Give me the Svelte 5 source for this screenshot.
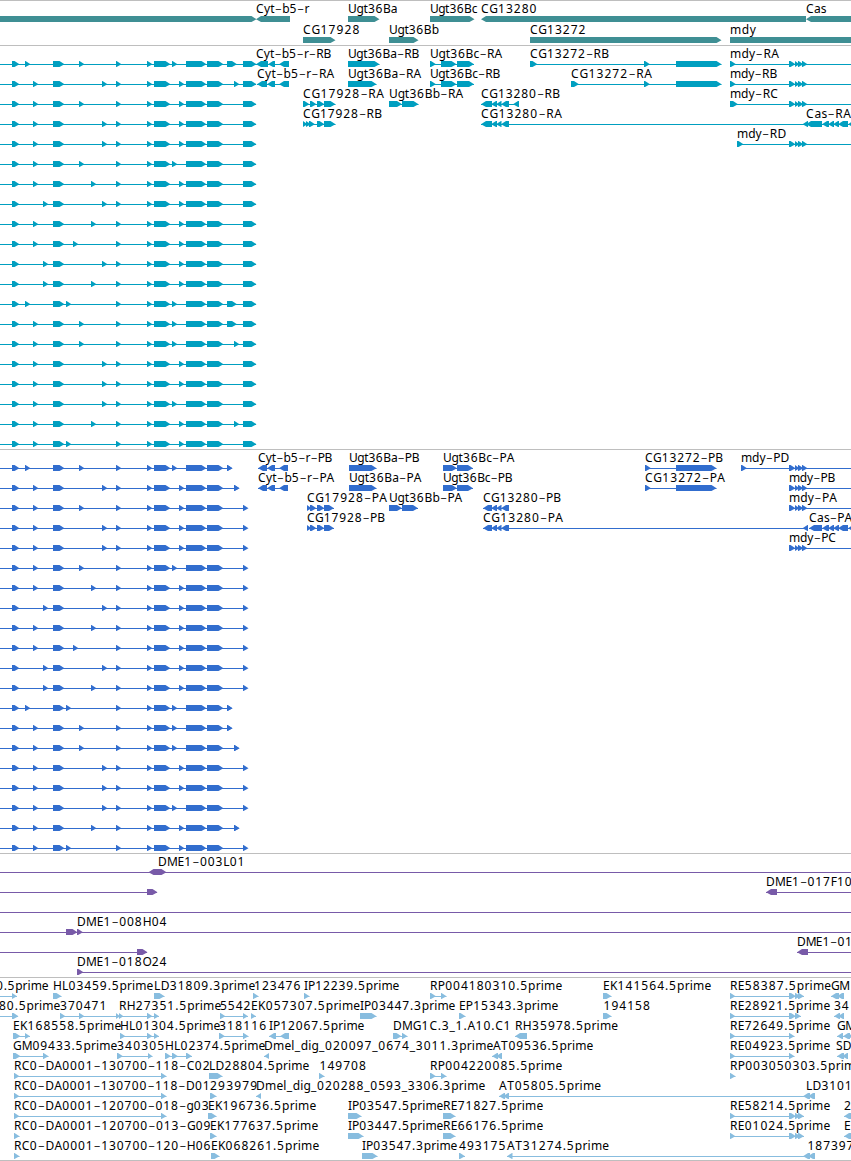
<script>
  const WIDTH = 851;

  // advance widths of the label characters, px at 12px type
  const advances = {
    '-': 7.8, '_': 6, '.': 4,
    A: 8, B: 8.2, C: 8.2, D: 9, E: 6.8, F: 6.4, G: 8.8, H: 9, I: 4, K: 7.6, L: 6.6,
    M: 10.6, O: 9.3, P: 7.3, R: 7.7, S: 6.8, T: 7.4, U: 8.8,
    a: 6.9, b: 7.5, c: 6, d: 7.5, e: 6.9, g: 7.3, i: 3.3, l: 3.3, m: 11.2, p: 7.5, r: 5, s: 5.8, t: 4.6, y: 6.4
  };

  // label, label start, label end, row, strand, blocks, [line start, line end]
  const feature = (label, x, end, row, strand, blocks, line) => {
    const line_ = line || [blocks[0][0], blocks[blocks.length - 1][1]];
    return { label, x, end, row, strand, blocks, line: line_ };
  };

  function place(label, x, end) {
    const chars = [...label];
    const widths = chars.map((c) => advances[c] ?? 7.8);
    const total = widths.reduce((a, b) => a + b, 0);
    const scale = end ? (end - x + 0.4) / total : 1;
    let pos = x;
    return widths.map((w, i) => {
      const at = chars[i] === '-' ? pos + 0.1 : pos;
      pos += w * scale;
      return at.toFixed(2);
    }).join(' ');
  }

  function baseline(label, y) {
    return [...label].map((c) => (c === '-' ? y + 2 : y)).join(' ');
  }

  function arrow([x1, x2], strand, y) {
    const top = y - 3;
    const bottom = y + 3;
    const head = Math.min(5, x2 - x1);
    if (strand === '<') {
      return `${x2},${top} ${x1 + head},${top} ${x1},${y + 0.2} ${x1 + head},${bottom} ${x2},${bottom}`;
    }
    return `${x1},${top} ${x2 - head},${top} ${x2},${y + 0.2} ${x2 - head},${bottom} ${x1},${bottom}`;
  }

  // alternative exons of each isoform at the left edge
  const isoforms = [
    [25, 79, 172, 227], [33, 102, 179, 234], [33, 79, 179], [33, 102, 179], [33, 102, 179],
    [33, 79, 172], [33, 91, 179], [43, 102, 179], [33, 91, 179], [33, 73, 179],
    [43, 102, 179], [43, 91, 179], [25, 66, 172, 227], [33, 79, 172, 227], [33, 79, 172, 234],
    [33, 102, 179], [33, 102, 179], [33, 102, 172], [33, 91, 179, 234], [33, 66, 179]
  ];
  const shared = [[12, 19.5], [53, 64.5], [116, 121.5], [147, 152.5], [154, 170.5], [186, 206.5], [207, 223.5]];

  const transcripts = isoforms.map((starts, row) => {
    const extra = starts.map((s) => [s, s === 227 ? 237 : s + 5.5]);
    return feature('', 0, 0, row, '>', [...shared, ...extra, [243, 256.5]], [0, 256]);
  });

  const proteins = isoforms.map((starts, row) => {
    const extra = starts.map((s) => [s, s + 5.5]);
    const last = starts[3] ?? 243;
    return feature('', 0, 0, row, '>', [...shared, ...extra, [last, last + 5.5]], [0, last + 4]);
  });

  const mdy = [[789, 795.5], [795, 799.5], [798, 803.5], [802, 807.5]];
  const cas = [[822, 829], [828, 834], [833, 839], [838, 848], [848, 858]];
  const cg13280 = [[491, 497], [496, 501.5], [501, 509]];

  const geneTrack = [
    feature('', 0, 0, 0, '>', [[-5, 256.5]]),
    feature('Cyt-b5-r', 256, 309, 0, '<', [[256, 290]]),
    feature('Ugt36Ba', 348, 397, 0, '>', [[348, 379.5]]),
    feature('CG13280', 481, 537, 0, '<', [[481, 806]]),
    feature('Ugt36Bc', 430, 477, 0, '>', [[430, 474.5]]),
    feature('Cas', 806, 826, 0, '<', [[806, 860]]),
    feature('CG17928', 303, 360, 1, '>', [[303, 335.5]]),
    feature('Ugt36Bb', 389, 438.5, 1, '>', [[389, 418.5]]),
    feature('CG13272', 530, 586, 1, '>', [[530, 721.5]]),
    feature('mdy', 730, 756, 1, '>', [[730, 870]])
  ];

  const rnaTrack = [
    ...transcripts,
    feature('Cyt-b5-r-RB', 256, 331, 0, '<', [[256, 268], [268, 275], [279, 289]]),
    feature('Cyt-b5-r-RA', 257, 334, 1, '<', [[257, 267], [267, 275], [279, 289]]),
    feature('Ugt36Ba-RB', 348, 419, 0, '>', [[348, 379.5]]),
    feature('Ugt36Ba-RA', 348, 421, 1, '>', [[348, 376.5]]),
    feature('Ugt36Bc-RA', 430, 502, 0, '>', [[430, 436], [441, 456.5], [457, 474]]),
    feature('Ugt36Bc-RB', 430, 500, 1, '>', [[430, 436], [441, 456.5], [457, 474]]),
    feature('CG17928-RA', 303, 384, 2, '>', [[303, 309.5], [310, 316.5], [317, 324.5], [324, 335.5]]),
    feature('CG17928-RB', 303, 382, 3, '>', [[303, 307.5], [306, 311], [309, 315], [317, 324.5], [324, 335.5]]),
    feature('Ugt36Bb-RA', 389, 463, 2, '>', [[389, 402], [402, 418.5]]),
    feature('CG13280-RB', 481, 560, 2, '<', [[481, 492], ...cg13280, [513, 519]]),
    feature('CG13280-RA', 481, 562, 3, '<', [[481, 492], ...cg13280, [802.5, 808]]),
    feature('CG13272-RB', 530, 609, 0, '>', [[530, 537.5], [644, 650], [676, 721.5]]),
    feature('CG13272-RA', 571, 652, 1, '>', [[571, 579], [644, 650], [676, 721.5]]),
    feature('mdy-RA', 730, 779, 0, '>', [[730, 736], ...mdy], [730, WIDTH]),
    feature('mdy-RB', 730, 777, 1, '>', [[730, 736], ...mdy], [730, WIDTH]),
    feature('mdy-RC', 730, 778, 2, '>', [[730, 738], ...mdy], [730, WIDTH]),
    feature('Cas-RA', 806, 851, 3, '<', [[806, 822], ...cas]),
    feature('mdy-RD', 737, 786, 4, '>', [[737, 743.5], ...mdy], [737, WIDTH])
  ];

  const proteinTrack = [
    ...proteins,
    feature('Cyt-b5-r-PB', 258, 332, 0, '<', [[258, 267], [267, 275], [279, 288]]),
    feature('Cyt-b5-r-PA', 258, 334, 1, '<', [[258, 267], [267, 275], [279, 288]]),
    feature('Ugt36Ba-PB', 349, 419, 0, '>', [[349, 376.5]]),
    feature('Ugt36Ba-PA', 349, 421, 1, '>', [[349, 376.5]]),
    feature('Ugt36Bc-PA', 443, 514, 0, '>', [[443, 457], [457, 473]]),
    feature('Ugt36Bc-PB', 443, 512, 1, '>', [[443, 457], [457, 473]]),
    feature('CG17928-PA', 307, 387, 2, '>', [[307, 311.5], [310, 316.5], [317, 324.5], [324, 334]]),
    feature('CG17928-PB', 307, 385, 3, '>', [[307, 311.5], [310, 316.5], [317, 324.5], [324, 334]]),
    feature('Ugt36Bb-PA', 389, 462, 2, '>', [[389, 402], [402, 418]]),
    feature('CG13280-PB', 483, 561, 2, '<', [[483, 492], ...cg13280]),
    feature('CG13280-PA', 483, 563, 3, '<', [[483, 492], ...cg13280, [802.5, 808]]),
    feature('CG13272-PB', 645, 723, 0, '>', [[645, 651], [676, 716.5]]),
    feature('CG13272-PA', 645, 725, 1, '>', [[645, 651], [676, 716.5]]),
    feature('mdy-PD', 741, 789, 0, '>', [[741, 747], ...mdy], [741, WIDTH]),
    feature('mdy-PB', 789, 835, 1, '>', mdy, [789, WIDTH]),
    feature('mdy-PA', 789, 837, 2, '>', mdy, [789, WIDTH]),
    feature('Cas-PA', 809, 852, 3, '<', [[809, 822], ...cas]),
    feature('mdy-PC', 789, 836, 4, '>', mdy, [789, WIDTH])
  ];

  const bacTrack = [
    feature('DME1-003L01', 158, 245, 0, '<', [[148.5, 160]], [0, WIDTH]),
    feature('', 0, 0, 0, '>', [[155, 166.5]]),
    feature('', 0, 0, 1, '>', [[147, 157.5]], [0, 157]),
    feature('DME1-017F10', 766, 852, 1, '<', [[766, 777]], [766, WIDTH]),
    feature('', 0, 0, 2, '>', [], [0, WIDTH]),
    feature('DME1-008H04', 77, 167, 3, '>', [[66, 77.5], [77, 83]], [0, WIDTH]),
    feature('', 0, 0, 4, '>', [[137, 147.5]], [0, 147]),
    feature('DME1-01', 797, 852, 4, '<', [[797, 808]], [797, WIDTH]),
    feature('DME1-018O24', 77, 167, 5, '>', [[77, 83.5]], [77, WIDTH])
  ];

  const re = [[730, 735.5], [789, 796], [795, 800.5], [798, 804]];

  const estTrack = [
    feature('0.5prime', -4, 48, 0, '>', [[12, 17]], [0, 17]),
    feature('HL03459.5prime', 53, 153, 0, '>', [[53, 61.5]]),
    feature('LD31809.3prime', 154, 255, 0, '>', [[154, 164.5]]),
    feature('123476', 254, 301, 0, '>', [[253, 258.5]]),
    feature('IP12239.5prime', 304, 399, 0, '>', [[304, 309.5]]),
    feature('RP004180310.5prime', 430, 562, 0, '>', [[430, 436], [441, 446.5]]),
    feature('EK141564.5prime', 603, 711, 0, '>', [[603, 611.5]]),
    feature('RE58387.5prime', 730, 831, 0, '>', re),
    feature('GM', 831, 849, 0, '<', [[831, 839], [837, 844]]),

    feature('80.5prime', -1, 60, 1, '>', [[12, 18.5]], [0, 18]),
    feature('370471', 60, 107, 1, '>', [[60, 65.5], [79, 84.5], [116, 120]]),
    feature('RH27351.5prime', 119, 221, 1, '>', [[119, 123.5], [147, 152.5], [154, 159]]),
    feature('5542', 220, 251, 1, '>', [[220, 225.5], [243, 248]]),
    feature('EK057307.5prime', 251, 360, 1, '>', [[251, 256]]),
    feature('IP03447.3prime', 360, 455, 1, '>', [[360, 376.5]]),
    feature('EP15343.3prime', 459, 558, 1, '>', [[459, 465.5]]),
    feature('194158', 603.5, 650.5, 1, '>', [[603, 611.5]]),
    feature('RE28921.5prime', 730, 830, 1, '>', [[730, 735.5], [789, 796], [795, 801]]),
    feature('34', 834, 849, 1, '<', [[834, 840], [838, 844]]),

    feature('EK168558.5prime', 13, 121, 2, '>', [[13, 20.5], [25, 30]]),
    feature('HL01304.5prime', 120, 220, 2, '>', [[120, 125.5], [147, 152.5], [154, 159]]),
    feature('318116', 219, 267, 2, '>', [[219, 225], [243, 248.5]]),
    feature('IP12067.5prime', 269, 364, 2, '<', [[269, 276], [280, 289]]),
    feature('DMG1C.3_1.A10.C1', 393, 511, 2, '>', [[393, 401.5], [402, 407.5]]),
    feature('RH35978.5prime', 515, 618, 2, '<', [[515, 527]]),
    feature('RE72649.5prime', 730, 830, 2, '>', [[730, 735.5], [789, 794.5]]),
    feature('GM', 837, 855, 2, '<', [[837, 843], [843, 850], [848, 858]]),

    feature('GM09433.5prime', 13, 117, 3, '>', [[13, 20.5], [43, 48.5]]),
    feature('340305', 117, 165, 3, '>', [[117, 123], [148, 152.5]]),
    feature('HL02374.5prime', 165, 265, 3, '>', [[165, 171], [172, 178], [186, 192]]),
    feature('Dmel_dig_020097_0674_3011.3prime', 264, 493, 3, '<', [[264, 269]]),
    feature('AT09536.5prime', 493, 593, 3, '<', [[492, 498], [496, 502]]),
    feature('RE04923.5prime', 730, 830, 3, '>', [[730, 735.5], [789, 794.5]]),
    feature('SD', 836, 851, 3, '<', [[837, 844], [842, 848]]),

    feature('RC0-DA0001-130700-118-C02', 14, 210, 4, '>', [[14, 19.5], [161, 166.5]]),
    feature('LD28804.5prime', 209, 309, 4, '>', [[209, 222.5]]),
    feature('149708', 319.5, 366.5, 4, '>', [[319, 324.5]]),
    feature('RP004220085.5prime', 430, 562, 4, '>', [[430, 436], [441, 446.5]]),
    feature('RP003050303.5prime', 730, 862, 4, '>', [[730, 735.5]]),

    feature('RC0-DA0001-130700-118-D01', 14, 210, 5, '>', [[14, 19.5], [161, 166.5]]),
    feature('293979', 210, 258, 5, '>', [[210, 216.5]]),
    feature('Dmel_dig_020288_0593_3306.3prime', 256, 485, 5, '<', [[256, 261]]),
    feature('AT05805.5prime', 499, 601, 5, '<', [[499, 505], [503, 509], [803, 810], [808, 815]]),
    feature('LD3101', 806, 852, 5, '<', [], [0, 0]),

    feature('RC0-DA0001-120700-018-g03', 14, 209, 6, '>', [[14, 19.5], [161, 166.5]]),
    feature('EK196736.5prime', 208, 316, 6, '>', [[208, 216.5]]),
    feature('IP03547.5prime', 348, 443, 6, '>', [[348, 361.5]]),
    feature('RE71827.5prime', 443, 543, 6, '>', [[443, 455.5]]),
    feature('RE58214.5prime', 730, 830, 6, '>', re),
    feature('2', 844, 851, 6, '<', [[844, 856]]),

    feature('RC0-DA0001-120700-013-G09', 14, 211, 7, '>', [[14, 19.5]]),
    feature('EK177637.5prime', 210, 318, 7, '>', [[210, 216.5]]),
    feature('IP03447.5prime', 348, 443, 7, '>', [[348, 363.5]]),
    feature('RE66176.5prime', 443, 543, 7, '>', [[443, 455.5]]),
    feature('RE01024.5prime', 730, 830, 7, '>', re),
    feature('E', 844, 850, 7, '<', [[844, 856]]),

    feature('RC0-DA0001-130700-120-H06', 14, 211, 8, '>', [[14, 19.5]]),
    feature('EK068261.5prime', 211, 319, 8, '>', [[211, 219.5]]),
    feature('IP03547.3prime', 362, 457, 8, '>', [[362, 377.5]]),
    feature('493175', 459, 506, 8, '>', [[459, 465]]),
    feature('AT31274.5prime', 507, 609, 8, '<', [[507, 512.5], [803, 810], [808, 815]]),
    feature('187397', 807.5, 854, 8, '<', [], [0, 0])
  ];

  const tracks = [
    { name: 'gene', color: '#3f8f94', height: 44, first: 18, pitch: 21, features: geneTrack },
    { name: 'rna', color: '#009fc0', height: 403, first: 18, pitch: 20, features: rnaTrack },
    { name: 'protein', color: '#316dce', height: 403, first: 18, pitch: 20, features: proteinTrack },
    { name: 'bac', color: '#785aa8', height: 123, first: 18, pitch: 20, features: bacTrack },
    { name: 'est', color: '#88bddf', height: 182, first: 18, pitch: 20, features: estTrack }
  ];
</script>

<main class="browser">
  {#each tracks as track (track.name)}
    <section class="track">
      <svg width={WIDTH} height={track.height} fill={track.color}>
        {#each track.features as f}
          {@const y = track.first + f.row * track.pitch}
          {#if track.name !== 'gene'}
            <rect x={f.line[0]} y={y} width={f.line[1] - f.line[0]} height="1" />
          {/if}
          {#each f.blocks as block}
            <polygon points={arrow(block, f.strand, y)} />
          {/each}
        {/each}
        {#each track.features.filter((f) => f.label) as f}
          {@const y = track.first + f.row * track.pitch - 6}
          <text x={place(f.label, f.x, f.end)} y={baseline(f.label, y)}>{#each f.label.split(/(-)/) as part}{#if part === '-'}<tspan class="dash">-</tspan>{:else}{part}{/if}{/each}</text>
        {/each}
      </svg>
    </section>
  {/each}
</main>

<style>
  :global(body) {
    background: #fff;
  }

  .browser {
    display: flex;
    flex-direction: column;
    width: 851px;
    height: 1161px;
    overflow: hidden;
    box-sizing: border-box;
    border-bottom: 1px solid #bebebe;
  }

  .track {
    border-top: 1px solid #bebebe;
    flex: none;
  }

  svg {
    display: block;
    overflow: hidden;
  }

  text {
    fill: #000;
    font-family: "Noto Sans", sans-serif;
    font-size: 12px;
  }

  .dash {
    font-family: "DejaVu Sans", sans-serif;
    font-size: 20px;
    font-weight: 200;
  }
</style>
